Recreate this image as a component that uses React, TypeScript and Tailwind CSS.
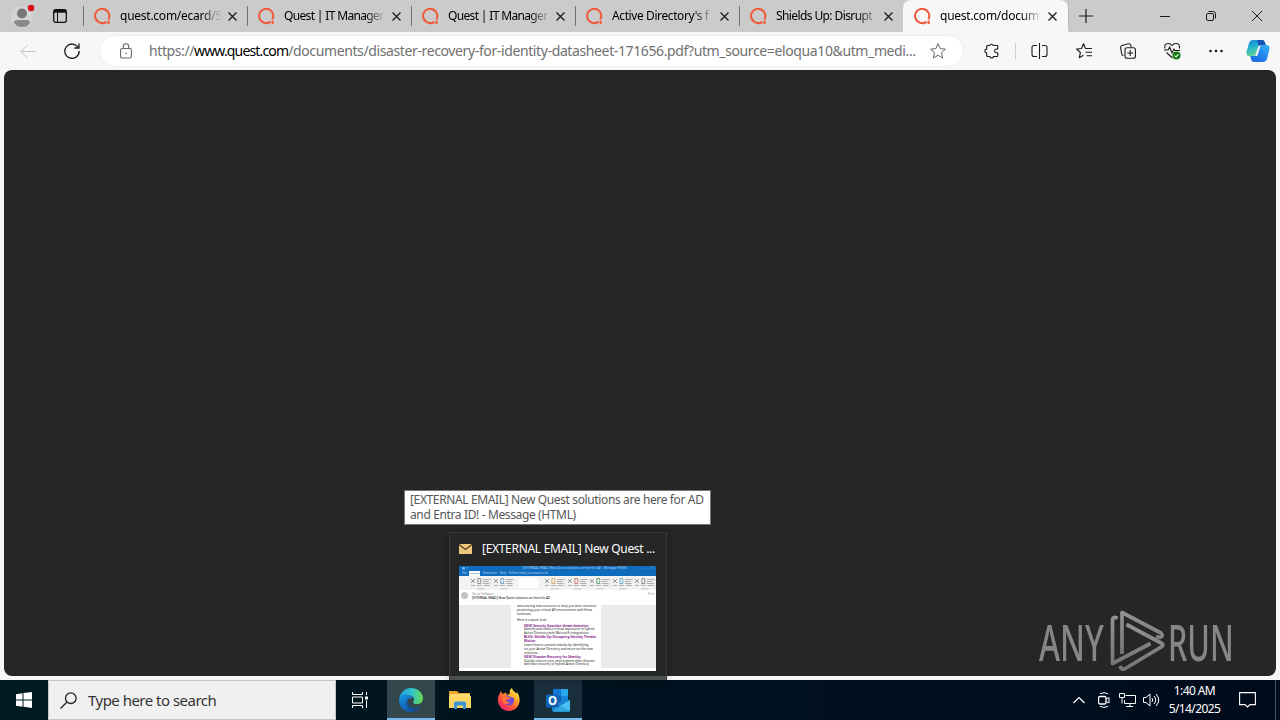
import React from 'react';

interface TabInfo {
  title: string;
  active?: boolean;
}

const tabs: TabInfo[] = [
  { title: 'quest.com/ecard/5' },
  { title: 'Quest | IT Manager' },
  { title: 'Quest | IT Manager' },
  { title: "Active Directory's f" },
  { title: 'Shields Up: Disrupt' },
  { title: 'quest.com/docum', active: true },
];

const tabTracking = [
  'tracking-[-0.25px]',
  'tracking-[-0.65px]',
  'tracking-[-0.65px]',
  'tracking-[-0.4px]',
  'tracking-[-0.6px]',
  'tracking-[-0.25px]',
];

function QuestIcon() {
  return (
    <svg className="h-[17px] w-[17px] shrink-0" viewBox="0 0 17 17" fill="none" stroke="#f0583a" strokeWidth="2">
      <path d="M12.300 13.700A7.100 7.100 0 1 1 14.300 11.500" />
      <path d="M8.300 15.500q2.200 0 4-1.800" />
      <path d="M14.600 12.700v3.300" strokeWidth="2.200" />
    </svg>
  );
}

function CloseIcon() {
  return (
    <svg className="h-[9px] w-[9px] shrink-0" viewBox="0 0 9 9" fill="none" stroke="#1b1b1b" strokeWidth="1.3">
      <path d="M.5.5l8 8M8.500.5l-8 8" />
    </svg>
  );
}

function BrowserTab({ tab, index }: { tab: TabInfo; index: number }) {
  return (
    <div
      className={
        tab.active
          ? 'flex h-8 w-[165px] items-center rounded-t-lg bg-[#f7f7f7] pl-[11px]'
          : 'flex h-8 w-[164px] items-center pl-[10px]'
      }
    >
      {!tab.active && <div className="-ml-[10px] mr-[10px] h-5 w-px bg-[#707070]" />}
      <QuestIcon />
      <div className="ml-[9px] w-[102px] overflow-hidden [mask-image:linear-gradient(to_right,#000_80%,transparent_100%)]">
        <span className={`block whitespace-nowrap text-[12px] leading-5 text-black ${tabTracking[index]}`}>{tab.title}</span>
      </div>
      <div className="ml-[6px] flex">
        <CloseIcon />
      </div>
    </div>
  );
}

function TabStrip() {
  return (
    <div className="flex h-8 bg-[#cbcbcb]">
      <div className="flex w-[83px] items-center pl-[11px]">
        <svg className="h-6 w-[26px]" viewBox="0 0 26 24">
          <circle cx="11" cy="13" r="10.800" fill="#d4d4d4" />
          <circle cx="11" cy="9.500" r="5" fill="#777" />
          <path d="M3 18.500q0-2.500 3-2.500h10q3 0 3 2.500-2 4.500-8 4.500t-8-4.500z" fill="#8a8a8a" />
          <circle cx="20" cy="4" r="3.200" fill="#d90b12" />
        </svg>
        <svg className="ml-[16px] h-[14px] w-[14px]" viewBox="0 0 14 14" fill="none" stroke="#111">
          <rect x=".7" y=".7" width="12.600" height="12.600" rx="2" strokeWidth="1.300" />
          <path d="M1 2.200h12" strokeWidth="3" />
          <path d="M4.500 3v10" />
        </svg>
      </div>
      {tabs.map((tab, i) => (
        <BrowserTab key={i} tab={tab} index={i} />
      ))}
      <div className="flex flex-1 items-center rounded-bl-lg border-l border-[#bcbcbc] pl-[10px]">
        <svg className="h-[14px] w-[14px]" viewBox="0 0 14 14" stroke="#1b1b1b" strokeWidth="1.200">
          <path d="M7 0v14M0 7h14" />
        </svg>
        <svg className="ml-[67px] h-3 w-[10px]" viewBox="0 0 10 12" stroke="#1b1b1b">
          <path d="M0 6.500h10" />
        </svg>
        <svg className="ml-[36px] h-[10px] w-[10px]" viewBox="0 0 10 10" fill="none" stroke="#1b1b1b">
          <rect x=".5" y="2.500" width="7" height="7" rx="1.500" />
          <path d="M2.500 .5H7A2.500 2.500 0 0 1 9.500 3v4.500" />
        </svg>
        <svg className="ml-[36px] h-[10px] w-[10px]" viewBox="0 0 10 10" stroke="#1b1b1b">
          <path d="M0 0l10 10M10 0L0 10" />
        </svg>
      </div>
    </div>
  );
}

function CopilotIcon() {
  return (
    <svg className="h-6 w-6" viewBox="0 0 24 24">
      <defs>
        <linearGradient id="cpA" x1="0" y1="0" x2="0.3" y2="1">
          <stop offset="0" stopColor="#1485d9" />
          <stop offset=".5" stopColor="#25b4d0" />
          <stop offset="1" stopColor="#5fd48f" />
        </linearGradient>
        <linearGradient id="cpB" x1="1" y1="0" x2="0" y2="1">
          <stop offset="0" stopColor="#35b9f5" />
          <stop offset=".5" stopColor="#2585ee" />
          <stop offset="1" stopColor="#1564df" />
        </linearGradient>
      </defs>
      <path d="M7 1h9q2 0 2.700 2l1 3h-5q-2 0-2.600 2l-2.500 7q-.7 2-2.600 2H3q-3 0-2.500-4L3 4q1-3 4-3z" fill="url(#cpA)" />
      <path d="M17 23H8q-2 0-2.700-2l-1-4h3.500q2 0 2.600-2l2.500-7q.7-2 2.600-2H21q3 0 2.500 4L21 20q-1 3-4 3z" fill="url(#cpB)" />
      <path d="M14.500 7h-1.200q-.8.500-1 1.500L9.500 17h1.300q.8-.5 1-1.500z" fill="#f7f7f7" />
      <path d="M11 1h5q2 0 2.700 2l1 3h-5q-1.400 0-2.200 1z" fill="#1453b5" />
    </svg>
  );
}

function Toolbar() {
  return (
    <div className="flex h-[38px] items-center bg-[#f7f7f7] pl-5">
      <svg className="h-4 w-4" viewBox="0 0 16 16" fill="none" stroke="#c4c4c4">
        <path d="M16 8.500H1M7.500 2L1 8.500 7.500 15" />
      </svg>
      <svg className="ml-7 h-4 w-4" viewBox="0 0 16 16" fill="none" stroke="#1b1b1b" strokeWidth="1.300">
        <path d="M14.300 4.700A7.200 7.200 0 1 0 15.200 8" />
        <path d="M15 .5v4.500h-4.600" />
      </svg>
      <div className="ml-[19px] flex h-8 w-[865px] items-center rounded-full border border-[#eeeeee] bg-white pl-5">
        <svg className="h-4 w-3 shrink-0" viewBox="0 0 12 16" fill="none" stroke="#666" strokeWidth="1.100">
          <rect x=".6" y="5.500" width="10.800" height="9.500" rx="1.500" />
          <path d="M3.300 5.500V3.500a2.700 2.700 0 0 1 5.400 0v2" />
          <circle cx="6" cy="10.200" r=".8" fill="#666" stroke="none" />
        </svg>
        <div className="ml-[17px] w-[771px] whitespace-nowrap text-[14px] leading-5 tracking-[-0.38px] text-[#707070]">
          <span className="tracking-[-0.4px]">https://</span>
          <span className="tracking-[-0.85px] text-black">www.quest.com</span>
          /documents/disaster-recovery-for-identity-datasheet-171656.pdf?utm_source=eloqua10&amp;utm_medi...
        </div>
        <svg className="ml-[10px] h-4 w-4 shrink-0" viewBox="0 0 16 16" fill="none" stroke="#666" strokeLinejoin="round">
          <path d="M8 .7l2.200 4.900 5.200.6-3.900 3.500 1.100 5.300L8 12.300 3.400 15l1.100-5.300L.6 6.200l5.200-.6z" />
        </svg>
      </div>
      <svg className="ml-5 h-4 w-4" viewBox="0 0 16 16" fill="none" stroke="#1b1b1b" strokeWidth="1.100" strokeLinejoin="round">
        <path d="M3.500 2.500h2.200a1.900 1.900 0 0 1 3.600 0H13q.8 0 .8.800v2.700h-1.300a1.900 1.900 0 0 0 0 3.800h1.300v2.900q0 .8-.8.800H9.500a1.900 1.900 0 0 1-3.700 0H3.500q-.8 0-.8-.8V9.900a1.900 1.900 0 0 1 0-3.800V3.300q0-.8.8-.8z" />
      </svg>
      <div className="ml-[15px] h-4 w-px bg-[#cfcfcf]" />
      <svg className="ml-[15px] h-4 w-[17px]" viewBox="0 0 17 16" fill="none" stroke="#1b1b1b" strokeWidth="1.100">
        <path d="M8.500 0v16M6 2.500H3Q1 2.500 1 4.500v7q0 2 2 2h3M11 2.500h3q2 0 2 2v7q0 2-2 2h-3" />
      </svg>
      <svg className="ml-[28px] h-4 w-[17px]" viewBox="0 0 17 16" fill="none" stroke="#1b1b1b" strokeWidth="1.100" strokeLinejoin="round">
        <path d="M9.500 5.500L7.500.8 5.500 5.500l-4.900.6L4.400 9.500 3.300 14.700l4.200-2.500M9.500 5.500H16M9.500 9.200H16M10.500 12.700H16" />
      </svg>
      <svg className="ml-[27px] h-4 w-4" viewBox="0 0 16 16" fill="none" stroke="#1b1b1b" strokeWidth="1.100">
        <path d="M3.500 12.500q-1.500-.2-1.800-1.700L.6 4.500Q.5 3 2 2.500L8.500.8Q10 .5 10.700 2l.5 2" />
        <rect x="5" y="4.700" width="10.400" height="10.600" rx="2" />
        <path d="M10.200 7v6M7.200 10h6" />
      </svg>
      <svg className="ml-[28px] h-[18px] w-[17px]" viewBox="0 0 17 18" fill="none" stroke="#1b1b1b" strokeWidth="1.100">
        <path d="M1 6.500Q0 1.500 4 1.500q2.500 0 4 2 1.500-2 4-2 4 0 3.500 5" />
        <path d="M0 8h4l1.700-3L8 11l2-4 1 1.500h5M2.500 10.500L8.500 16" />
        <circle cx="12.500" cy="13.500" r="4" fill="#107c10" stroke="none" />
        <path d="M10.600 13.600l1.400 1.300 2.400-2.600" stroke="#fff" />
      </svg>
      <svg className="ml-[27px] h-4 w-4" viewBox="0 0 16 16" fill="#1b1b1b">
        <circle cx="2.500" cy="8" r="1.300" />
        <circle cx="8" cy="8" r="1.300" />
        <circle cx="13.500" cy="8" r="1.300" />
      </svg>
      <div className="ml-[22px]">
        <CopilotIcon />
      </div>
    </div>
  );
}

function Watermark() {
  return (
    <div className="flex h-[64px] w-[196px] text-[51px] leading-[64px] text-[#868686]">
      <div className="w-[73px] pl-[3px]">
        <span className="inline-block origin-left scale-x-[0.63] font-medium">ANY</span>
      </div>
      <svg className="h-[64px] w-[58px] shrink-0" viewBox="73 0 58 64">
        <defs>
          <linearGradient id="wm" x1="0" y1="0" x2="0" y2="1">
            <stop offset="0" stopColor="#929292" />
            <stop offset="1" stopColor="#767676" />
          </linearGradient>
        </defs>
        <g fill="none" stroke="url(#wm)" strokeWidth="3.700" strokeLinejoin="round">
          <path d="M81.500 9.500Q76.500 6.500 76.500 12v42.500l38-20" />
          <path d="M86 45V3.500l39 20.500q3 3-1 4.500l-4-1" />
          <path d="M90.500 15.500L126 34.500q1.500 1.500 0 3L88.500 60q-3 1-4.500-3" />
        </g>
      </svg>
      <div className="w-[65px] pl-px">
        <span className="inline-block origin-left scale-x-[0.6] font-medium">RUN</span>
      </div>
    </div>
  );
}

const bodyLines = [
  { text: 'announcing new solutions to help you with resilience' },
  { text: 'protecting your critical AD environment with Entra' },
  { text: 'solutions.' },
  { text: '' },
  { text: 'Here is a quick look:' },
  { text: '' },
  { text: 'NEW! Security Guardian threat detection', link: true },
  { text: 'Identify and reduce critical exposures in hybrid' },
  { text: 'Active Directory with Microsoft integrations' },
  { text: 'BLOG: Shields Up: Disrupting Identity Threats', link: true },
  { text: 'Motion', link: true },
  { text: 'Learn how to prevent attacks by identifying' },
  { text: 'on your Active Directory and more on the new' },
  { text: 'solutions.' },
  { text: 'NEW! Disaster Recovery for Identity', link: true },
  { text: 'Quickly restore your environment after disaster' },
  { text: 'with fast recovery of hybrid Active Directory' },
];

function RibbonGroup({ accent }: { accent: string }) {
  return (
    <svg className="h-[13px] w-[23px]" viewBox="0 0 23 13" fill="none" stroke="#777" strokeWidth=".8">
      <path d="M2 2l4 4M6 2L2 6" />
      <path d="M9 1.500v5h3v-5z" stroke={accent} />
      <path d="M14 2.500h8M14 4.500h6M14 6.500h7M2 8.500h4M8 8.500h5M15 8.500h6" stroke="#9a9a9a" />
      <path d="M8 12h8" stroke="#b8b8b8" />
      <path d="M22.700 0v13" stroke="#d9d9d9" strokeWidth=".5" />
    </svg>
  );
}

function MailThumbnail() {
  return (
    <div className="flex h-[105px] w-[197px] flex-col overflow-hidden bg-white">
      <div className="h-[10px] bg-[#0f6cbd]">
        <div className="flex h-[5px] items-center justify-between px-[3px] text-[3px] leading-[5px] text-[#b5d3ee]">
          <span>▣ ↶</span>
          <span className="pl-10">[EXTERNAL EMAIL] New Quest solutions are here for AD - Message (HTML)</span>
          <span>▫ &nbsp; &nbsp; – □ ×</span>
        </div>
        <div className="flex h-[5px] text-[3px] leading-[5px] text-[#b5d3ee]">
          <span className="w-[10px] pl-[3px]">File</span>
          <span className="w-[11px] bg-white text-center text-[2.500px] text-[#0f6cbd]">Message</span>
          <span className="pl-[3px]">Developer &nbsp; Help &nbsp; Tell me what you want to do</span>
        </div>
      </div>
      <div className="flex h-[14px] items-center bg-[#f3f3f3] pl-[10px]">
        <RibbonGroup accent="#777777" />
        <RibbonGroup accent="#5b8bbd" />
        <div className="mx-[5px] h-[10px] w-[19px] bg-white" />
        <RibbonGroup accent="#c99b4a" />
        <RibbonGroup accent="#b5655c" />
        <RibbonGroup accent="#3f8a5a" />
        <RibbonGroup accent="#4ba3c9" />
        <RibbonGroup accent="#777777" />
      </div>
      <div className="flex h-[15px] shrink-0 items-start gap-[4px] px-[2px] pt-[2px] text-[3px] leading-[4px] text-[#555]">
        <div className="h-[7px] w-[7px] rounded-full bg-[#c4c4c4]" />
        <div className="flex-1 whitespace-nowrap">
          <p className="text-[#888]">Quest Software</p>
          <p className="text-black">[EXTERNAL EMAIL] New Quest solutions are here for AD</p>
        </div>
        <span className="text-[#aaa]">Wed</span>
      </div>
      <div className="flex h-[63px] justify-center overflow-hidden bg-[#ebebeb]">
        <div className="mr-[3px] h-[63px] w-[90px] overflow-hidden bg-white pl-[6px] text-[3.200px] leading-[3.900px] text-[#222]">
          {bodyLines.map((line, i) => (
            <p
              key={i}
              className={
                line.link
                  ? 'h-[3.900px] whitespace-nowrap pl-[7px] font-bold text-[#88248c]'
                  : line.text === ''
                    ? 'h-[2px]'
                    : i > 5
                      ? 'h-[3.900px] whitespace-nowrap pl-[7px]'
                      : 'h-[3.900px] whitespace-nowrap'
              }
            >
              {line.text}
            </p>
          ))}
        </div>
      </div>
    </div>
  );
}

function WindowPreview() {
  return (
    <div className="absolute left-[449px] top-[532px] flex h-[148px] w-[218px] flex-col border border-b-0 border-[#393939] bg-[#262626] shadow-[0_0_8px_rgba(0,0,0,0.25)]">
      <div className="flex h-[33px] items-center pb-px pl-[9px]">
        <svg className="h-[10px] w-[13px] shrink-0" viewBox="0 0 13 10">
          <path d="M0 0h13v10H0z" fill="#edc77d" />
          <path d="M0 .5l6.500 5 6.500-5" fill="none" stroke="#4e3b1b" strokeWidth="1.200" />
        </svg>
        <span className="ml-[10px] whitespace-nowrap pb-px text-[12px] leading-4 tracking-[-0.3px] text-white">[EXTERNAL EMAIL] New Quest ...</span>
      </div>
      <div className="px-[9px]">
        <MailThumbnail />
      </div>
      <div className="mt-auto h-1 bg-[#4b5053]" />
    </div>
  );
}

function EdgeIcon() {
  return (
    <svg className="h-6 w-6" viewBox="0 0 24 24">
      <defs>
        <linearGradient id="edA" x1="0" y1=".4" x2="1" y2=".5">
          <stop offset="0" stopColor="#2199d8" />
          <stop offset=".5" stopColor="#2fc5cf" />
          <stop offset="1" stopColor="#68d954" />
        </linearGradient>
        <linearGradient id="edB" x1="0" y1="0" x2=".7" y2="1">
          <stop offset="0" stopColor="#1793df" />
          <stop offset="1" stopColor="#1150a3" />
        </linearGradient>
      </defs>
      <path d="M.2 11C1 4.500 6 0 12 0c7 0 12 4.800 12 10.500 0 3.500-2.800 5.700-6 5.700-3 0-4.500-1-3.700-2.200 2-3 .2-6-3.300-6.500C6 6.700 2 8 .2 11z" fill="url(#edA)" />
      <path d="M.1 11C1.500 7.500 5 6.300 8.500 6.700 12 7 14 9 14 10.500 10 9 7.500 12 8 15c.7 4.500 6 7 12 4.500l2-1c-3 4-7 5.500-10 5.500C4.500 24-.7 18 .1 11z" fill="url(#edB)" />
      <path d="M9 11c-4 5 0 12 7 12 2.500-.8 4.500-2.200 6-4.500-6 3-12 1-13-2.500-.5-2-.2-3.500 0-5z" fill="#174f94" />
    </svg>
  );
}

function ExplorerIcon() {
  return (
    <svg className="h-[18px] w-[22px]" viewBox="0 0 22 18">
      <path d="M0 0h8l2 2h11v4H0z" fill="#e8a823" />
      <path d="M1 3h20v14H1z" fill="#fddc76" />
      <path d="M0 5h22v12H0z" fill="#ffd766" />
      <path d="M5 18v-6q0-1.500 1.500-1.500h9Q17 10.500 17 12v6h-3v-3.500H8V18z" fill="#3d95d5" />
    </svg>
  );
}

function FirefoxIcon() {
  return (
    <svg className="h-6 w-6" viewBox="0 0 24 24">
      <defs>
        <linearGradient id="ffA" x1=".9" y1=".1" x2=".2" y2="1">
          <stop offset="0" stopColor="#fff14a" />
          <stop offset=".35" stopColor="#ff9d22" />
          <stop offset=".65" stopColor="#ff4e42" />
          <stop offset="1" stopColor="#ed1f75" />
        </linearGradient>
      </defs>
      <path d="M4 3l1.500 3L9 4.500 10 7h3c-1-3 0-6 2-7 .5 3 3 4 4.500 5.500L20 4c6 9 1 19-8 19C4 23-1 15 1.500 8z" fill="url(#ffA)" />
      <circle cx="12" cy="12" r="5.200" fill="#7149d6" />
      <path d="M5 9q3-2 7 0 2 .5 1 2l-4 1q1 3 4.500 2-2.500 3-6 1.500T5 9z" fill="#ff7139" />
      <path d="M10 7q6-3 8 4-2-2-4-2z" fill="#ffb72b" />
    </svg>
  );
}

function OutlookIcon() {
  return (
    <svg className="h-[23px] w-[24px]" viewBox="0 0 24 23">
      <path d="M7 0h15v14H7z" fill="#0f5fac" />
      <path d="M7 0h8v7H7z" fill="#0f78d4" />
      <path d="M15 0h7v7h-7z" fill="#28a8ea" />
      <path d="M15 7h7v7h-7z" fill="#1384d8" />
      <path d="M6 13h8l10-2v10q0 2-2 2H8q-2 0-2-2z" fill="#1b83ce" />
      <path d="M24 11v10q0 1-1 1.500L14 17z" fill="#45c1f1" />
      <path d="M24 22L12 15.500 7 22.500h15z" fill="#2fa6de" />
      <rect y="5.500" width="13" height="13" rx="1" fill="#0f64b8" />
      <text x="6.500" y="16" fill="#fff" fontSize="11.500" fontWeight="700" textAnchor="middle">O</text>
    </svg>
  );
}

function SystemTray() {
  return (
    <div className="ml-auto flex h-10 items-center">
      <svg className="h-3 w-3" viewBox="0 0 12 12" fill="none" stroke="#fff" strokeWidth="1.200">
        <path d="M.5 9L6 3.500 11.500 9" />
      </svg>
      <svg className="ml-[13px] h-4 w-3" viewBox="0 0 12 16" fill="none" stroke="#fff">
        <rect x=".5" y="4.500" width="7.500" height="7.500" rx="1.500" strokeWidth="1.300" />
        <path d="M8 7l3-1.500v5.500L8 9.500M2 1.800q4-2.300 8 0M2 14.300q4 2.300 8 0" />
      </svg>
      <svg className="ml-[9px] h-4 w-[17px]" viewBox="0 0 17 16" fill="none" stroke="#fff">
        <path d="M6.500 3.500h10v8h-11V8M11 11.500v3M7 14.500h7" />
        <path d="M.5 1.500h5v4h-5zM3 5.500v6" />
      </svg>
      <svg className="ml-[7px] h-4 w-[17px]" viewBox="0 0 17 16" fill="none" stroke="#fff">
        <path d="M.5 5.500H3L7 2v12L3 10.500H.5zM9 6q1.500 2 0 4M11 4q3.500 4 0 8M13 2q5.500 6 0 12" />
      </svg>
      <div className="ml-[7px] flex w-[55px] flex-col items-center whitespace-nowrap text-[12px] leading-[18px] tracking-[-0.6px] text-white">
        <span>1:40 AM</span>
        <span>5/14/2025</span>
      </div>
      <svg className="ml-[17px] h-4 w-[17px]" viewBox="0 0 17 16" fill="none" stroke="#fff" strokeWidth="1.100">
        <path d="M.6.600h15.800v12H11L8.500 15 6 12.600H.6z" />
      </svg>
      <div className="ml-[19px] mr-1 h-10 w-px bg-[#4a505c]" />
    </div>
  );
}

function Taskbar() {
  return (
    <div className="flex h-10 bg-gradient-to-r from-[#001a22] via-[#00121f] to-[#000b1c]">
      <div className="flex w-12 items-center justify-center">
        <svg className="h-4 w-4" viewBox="0 0 16 16" fill="#fff">
          <path d="M0 2.300L6.500 1.300V7.500H0zM7.500 1.100L16 0v7.500H7.500zM0 8.500h6.500v6.200L0 13.800zM7.500 8.500H16V16l-8.500-1.200z" />
        </svg>
      </div>
      <div className="flex w-[288px] items-center border border-[#c6c6c6] bg-[#f0f0f0] pl-[11px]">
        <svg className="h-[17px] w-[17px]" viewBox="0 0 17 17" fill="none" stroke="#222" strokeWidth="1.300">
          <circle cx="10.800" cy="6.200" r="5.300" />
          <path d="M7 10L.5 16.500" />
        </svg>
        <span className="ml-[11px] text-[15px] leading-5 tracking-[-0.52px] text-[#333]">Type here to search</span>
      </div>
      <div className="flex w-[51px] items-center pl-4">
        <svg className="h-4 w-4" viewBox="0 0 16 16" fill="none" stroke="#fff">
          <path d="M.5 0v2.500h10V0M.5 16v-2.500h10V16M.5 5h10v6H.5zM14.500 0v3M14.500 8.500V16" />
          <path d="M13 4.500h3v3h-3z" fill="#fff" stroke="none" />
        </svg>
      </div>
      <div className="flex w-12 items-center justify-center border-b-2 border-[#76b9ed] bg-[#33474d] pt-[2px]">
        <EdgeIcon />
      </div>
      <div className="flex w-[50px] items-center justify-center">
        <ExplorerIcon />
      </div>
      <div className="flex w-[49px] items-center pl-[12px]">
        <FirefoxIcon />
      </div>
      <div className="flex w-12 items-center justify-center border-b-2 border-[#76b9ed] bg-[#1a2f3c] pt-[2px]">
        <OutlookIcon />
      </div>
      <SystemTray />
    </div>
  );
}

export default function App() {
  return (
    <div className="relative flex h-[720px] w-[1280px] flex-col overflow-hidden bg-[#f7f7f7] font-['Noto_Sans','Open_Sans',sans-serif]">
      <TabStrip />
      <Toolbar />
      <div className="mx-1 mb-1 flex h-[606px] items-end justify-end rounded-lg bg-[#262626] pb-[3px] pr-[44px]">
        <Watermark />
      </div>
      <Taskbar />
      <WindowPreview />
      <div className="absolute left-[404px] top-[490px] h-[35px] w-[307px] border border-[#767676] bg-white pl-[5px] pt-px text-[12px] leading-[15px] tracking-[-0.37px] text-[#575757]">
        <p className="whitespace-nowrap">[EXTERNAL EMAIL] New Quest solutions are here for AD</p>
        <p className="whitespace-nowrap">and Entra ID! - Message (HTML)</p>
      </div>
    </div>
  );
}
